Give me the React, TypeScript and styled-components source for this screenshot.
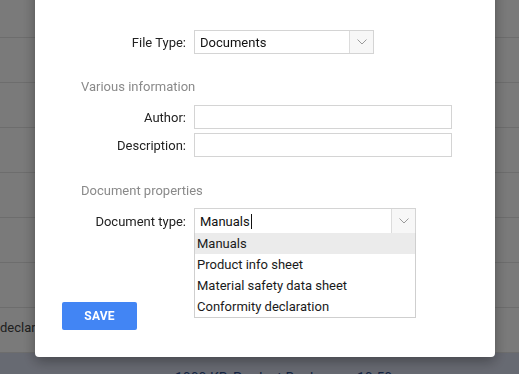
import styled, { createGlobalStyle } from "styled-components";

const GlobalStyle = createGlobalStyle`
  html, body {
    margin: 0;
    padding: 0;
    width: 519px;
    height: 374px;
    overflow: hidden;
    background: #ffffff;
    font-family: Roboto, "Liberation Sans", Arial, sans-serif;
  }
`;

const bgRows = [
    { cells: ["", "", ""] },
    { cells: ["", "", ""] },
    { cells: ["", "", ""] },
    { cells: ["", "", ""] },
    { cells: ["", "", ""] },
    { cells: ["", "", ""] },
    { cells: ["", "", ""] },
    { cells: ["declaration", "", ""] },
    { cells: ["", "", ""], active: true, links: ["1000 KB", "Product Book", "10.50"] },
];

const documentTypes = ["Manuals", "Product info sheet", "Material safety data sheet", "Conformity declaration"];

const Table = styled.div`
  margin-top: -7px;
  display: flex;
  flex-direction: column;
`;

const TableRow = styled.div<{ $active?: boolean }>`
  height: 45px;
  box-sizing: border-box;
  border-bottom: 1px solid #e4e4e4;
  background: ${(p) => (p.$active ? "#d8ddee" : "#ffffff")};
  display: grid;
  grid-template-columns: 175px 58px 124px 1fr;
  align-items: center;
  font-size: 13px;
  color: #555;
`;

const Cell = styled.div<{ $link?: boolean }>`
  white-space: nowrap;
  overflow: hidden;
  align-self: ${(p) => (p.$link ? "start" : "center")};
  padding-top: ${(p) => (p.$link ? "17px" : "0")};
  padding-bottom: ${(p) => (p.$link ? "0" : "6px")};
  color: ${(p) => (p.$link ? "#2b4c8c" : "#444")};
  font-size: ${(p) => (p.$link ? "14px" : "13px")};
`;

const Overlay = styled.div`
  position: fixed;
  inset: 0;
  background: rgba(0, 0, 0, 0.52);
`;

const Dialog = styled.div`
  position: fixed;
  left: 35px;
  top: -20px;
  width: 460px;
  box-sizing: border-box;
  padding: 50px 0 27px 0;
  background: #ffffff;
  border-radius: 4px;
  box-shadow: 0 4px 14px rgba(0, 0, 0, 0.35);
  display: flex;
  flex-direction: column;
`;

const FieldRow = styled.div<{ $gap?: number }>`
  display: grid;
  grid-template-columns: 151px auto;
  column-gap: 8px;
  align-items: center;
  margin-top: ${(p) => p.$gap ?? 0}px;
`;

const Label = styled.label`
  text-align: right;
  font-size: 13px;
  color: #222;
`;

const SectionTitle = styled.div<{ $gap: number }>`
  margin-top: ${(p) => p.$gap}px;
  padding-left: 46px;
  font-size: 13px;
  line-height: 16px;
  color: #8a8a8a;
`;

const Box = styled.div<{ $width: number; $height?: number }>`
  position: relative;
  width: ${(p) => p.$width}px;
  height: ${(p) => p.$height ?? 24}px;
  box-sizing: border-box;
  border: 1px solid #d4d4d4;
  display: flex;
  align-items: center;
  background: #fff;
`;

const BoxText = styled.div`
  flex: 1;
  padding-left: 5px;
  font-size: 13px;
  color: #111;
  display: flex;
  align-items: center;
`;

const Caret = styled.span`
  display: inline-block;
  width: 1px;
  height: 15px;
  margin-left: 1px;
  background: #111;
`;

const ArrowCell = styled.div`
  width: 23px;
  height: 100%;
  border-left: 1px solid #dcdcdc;
  background: #f7f7f7;
  display: flex;
  align-items: center;
  justify-content: center;
`;

const Menu = styled.ul`
  position: absolute;
  top: 100%;
  left: -1px;
  right: -1px;
  margin: 0;
  padding: 0;
  list-style: none;
  border: 1px solid #cfcfcf;
  border-top: none;
  background: #fff;
  z-index: 2;
`;

const MenuItem = styled.li<{ $active?: boolean }>`
  height: 21px;
  line-height: 21px;
  padding-left: 2px;
  font-size: 13px;
  color: #1a1a1a;
  background: ${(p) => (p.$active ? "#ebebeb" : "transparent")};
`;

const SaveButton = styled.button`
  align-self: flex-start;
  margin: 68px 0 0 27px;
  width: 75px;
  height: 28px;
  border: none;
  border-radius: 2px;
  background: #4285f4;
  color: #fff;
  font-family: Roboto, "Liberation Sans", Arial, sans-serif;
  font-weight: 700;
  font-size: 12px;
  letter-spacing: 0.2px;
  cursor: pointer;
`;

const Chevron = () => (
    <svg width="10" height="6" viewBox="0 0 10 6">
        <path d="M0.5 0.5 L5 5 L9.5 0.5" fill="none" stroke="#9a9a9a" strokeWidth="1" />
    </svg>
);

const App = () => {
    return (
        <>
            <GlobalStyle />
            <Table>
                {bgRows.map((row, index) => (
                    <TableRow key={index} $active={row.active}>
                        {row.links
                            ? [<Cell key="s" />, ...row.links.map((t) => <Cell key={t} $link>{t}</Cell>)]
                            : row.cells.map((c, i) => <Cell key={i}>{c}</Cell>)}
                    </TableRow>
                ))}
            </Table>
            <Overlay />
            <Dialog>
                <FieldRow>
                    <Label>File Type:</Label>
                    <Box $width={180}>
                        <BoxText>Documents</BoxText>
                        <ArrowCell>
                            <Chevron />
                        </ArrowCell>
                    </Box>
                </FieldRow>

                <SectionTitle $gap={25}>Various information</SectionTitle>
                <FieldRow $gap={10}>
                    <Label>Author:</Label>
                    <Box $width={258} />
                </FieldRow>
                <FieldRow $gap={4}>
                    <Label>Description:</Label>
                    <Box $width={258} />
                </FieldRow>

                <SectionTitle $gap={26}>Document properties</SectionTitle>
                <FieldRow $gap={9}>
                    <Label>Document type:</Label>
                    <Box $width={222} $height={26}>
                        <BoxText>
                            Manuals<Caret />
                        </BoxText>
                        <ArrowCell>
                            <Chevron />
                        </ArrowCell>
                        <Menu>
                            {documentTypes.map((t, i) => (
                                <MenuItem key={t} $active={i === 0}>{t}</MenuItem>
                            ))}
                        </Menu>
                    </Box>
                </FieldRow>

                <SaveButton>SAVE</SaveButton>
            </Dialog>
        </>
    );
};

export default App;
